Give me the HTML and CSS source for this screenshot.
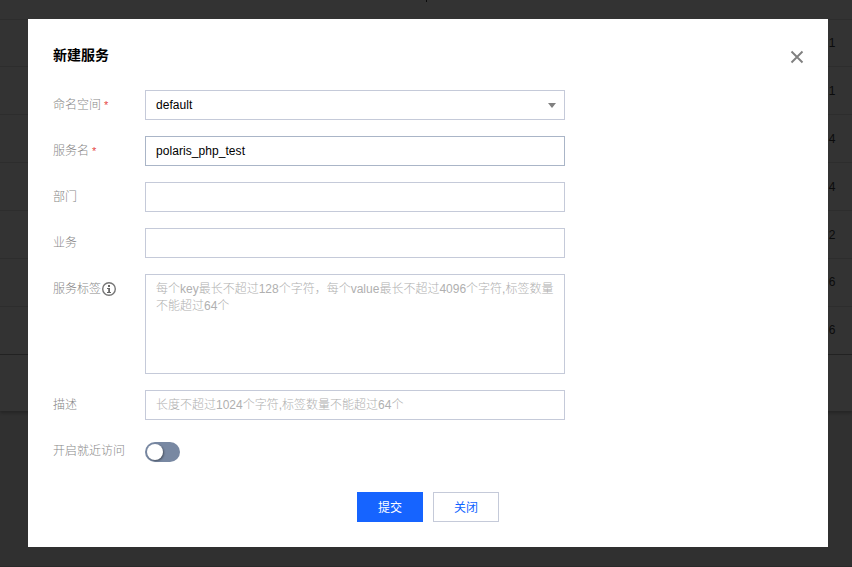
FILE: index.html
```html
<!DOCTYPE html>
<html lang="zh-CN">
<head>
<meta charset="utf-8">
<title>新建服务</title>
<link rel="stylesheet" href="styles.css">
</head>
<body>
<div class="page">
  <div class="table">
    <div class="row row-head"><i class="tick"></i></div>
    <div class="row row-first">1</div>
    <div class="row">1</div>
    <div class="row">4</div>
    <div class="row">4</div>
    <div class="row">2</div>
    <div class="row row-up">6</div>
    <div class="row row-up row-last">6</div>
    <div class="pager"></div>
  </div>
</div>
<div class="overlay">
  <div class="dialog">
    <div class="head">
      <h3>新建服务</h3>
      <svg class="close" width="14" height="14" viewBox="0 0 14 14"><path d="M1.500 1.500 12.500 12.500M12.500 1.500 1.500 12.500" fill="none" stroke="#808080" stroke-width="1.900"/></svg>
    </div>
    <div class="form">
      <div class="item"><label>命名空间<span class="req">*</span></label>
        <div class="field select">default<svg width="8" height="5" viewBox="0 0 8 5"><path d="M0 0h8L4 5z" fill="#808080"/></svg></div></div>
      <div class="item"><label>服务名<span class="req">*</span></label><div class="field active">polaris_php_test</div></div>
      <div class="item"><label>部门</label><div class="field"></div></div>
      <div class="item"><label>业务</label><div class="field"></div></div>
      <div class="item"><label>服务标签<svg class="info" width="16" height="16" viewBox="0 0 16 16"><circle cx="8" cy="8" r="6.300" fill="none" stroke="#777" stroke-width="1.400"/><path d="M7 4h2v2H7zM6 7h3v4h1v1H6v-1h1.200V8H6z" fill="#666"/></svg></label>
        <div class="field area">每个key最长不超过128个字符，每个value最长不超过4096个字符,标签数量不能超过64个</div></div>
      <div class="item"><label>描述</label><div class="field hint">长度不超过1024个字符,标签数量不能超过64个</div></div>
      <div class="item"><label>开启就近访问</label><div class="switch"><i></i></div></div>
    </div>
    <div class="foot"><button class="primary">提交</button><button>关闭</button></div>
  </div>
</div>
</body>
</html>
```
FILE: styles.css
```css
* { box-sizing: border-box; }
body {
  margin: 0;
  height: 567px;
  overflow: hidden;
  background: #303030;
  font: 12px/18px "Liberation Sans", "Noto Sans CJK SC", sans-serif;
  color: #000;
}
.page { height: 567px; border-bottom: 1px solid #292929; }
.table { height: 411px; background: #333; box-shadow: 0 2px 3px rgba(0, 0, 0, .25); }
.row {
  height: 48px;
  padding: 15px 16.5px 0 0;
  border-bottom: 1px solid #2d2d2d;
  text-align: right;
  color: #0b0b0b;
}
.row-head { height: 20px; padding: 0; }
.row-first { height: 47px; padding-top: 14px; }
.row-up { padding-top: 14px; }
.row-last { border-color: #222; }
.tick { display: block; width: 1px; height: 2px; margin-left: 426px; background: #0b0b0b; }

.overlay { position: absolute; top: 19px; left: 28px; }
.dialog { width: 800px; height: 528px; padding: 25px; background: #fff; }
.head { display: flex; justify-content: space-between; height: 46px; }
.head h3 { margin: 0; font-size: 14px; line-height: 22px; font-weight: 700; }
.close { margin: 6px -1px 0 0; }
.form { display: flex; flex-direction: column; gap: 16px; }
.item { display: flex; }
.item label {
  display: flex;
  width: 92px;
  padding-top: 6px;
  color: #888;
  font-weight: 300;
}
.req { margin: 0 0 0 3px; font-size: 11px; color: #e54545; font-weight: 400; }
.info { margin-top: 1px; }
.field {
  width: 420px;
  height: 30px;
  padding: 5px 10px;
  border: 1px solid #c5cad9;
  background: #fff;
}
.select, .active { letter-spacing: .06px; }
.active { border-color: #aab5c7; }
.select { display: flex; justify-content: space-between; }
.select svg { margin: 7px -2px 0 0; }
.hint, .area { color: #b0b0b0; font-weight: 300; }
.area { height: 100px; padding-top: 6px; line-height: 17px; }
.switch { width: 35px; height: 20px; margin-top: 6px; padding: 2px; border-radius: 10px; background: #7888a2; }
.switch i { display: block; width: 16px; height: 16px; border-radius: 50%; background: #fff; box-shadow: 1px 1px 2px rgba(0, 0, 0, .4); }
.foot { display: flex; gap: 10px; margin: 30px 0 0 304px; }
.item:last-child { height: 26px; }
button {
  width: 66px;
  height: 30px;
  padding: 2px 0 0;
  border: 1px solid #c5cad9;
  background: #fff;
  color: #0f63ff;
  font: inherit;
}
.primary { border-color: #1664ff; background: #1664ff; color: #fff; }
```
